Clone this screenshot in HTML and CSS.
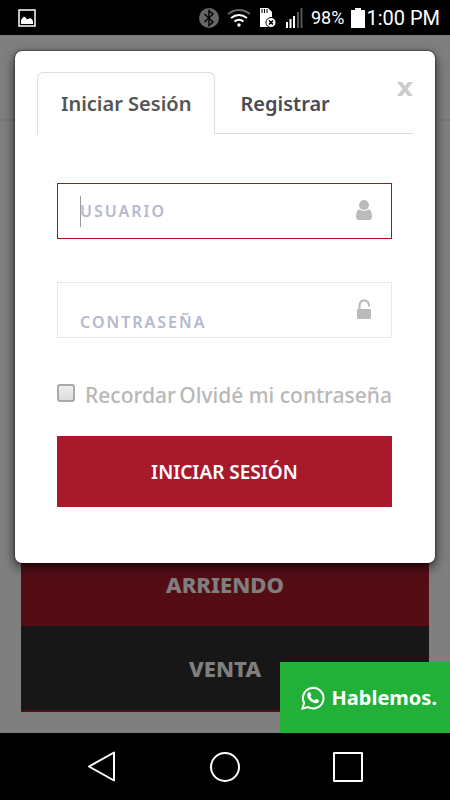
FILE: index.html
```html
<!DOCTYPE html>
<html lang="es">
  <head>
    <meta charset="utf-8">
    <meta name="viewport" content="width=device-width, initial-scale=1">
    <title>Iniciar Sesión</title>
    <link rel="stylesheet" href="styles.css">
  </head>
  <body>
    <div class="status-bar">
      <svg width="18" height="18" viewBox="0 0 18 18">
        <rect x="1" y="1" width="16" height="16" fill="none" stroke="#fff" stroke-width="1.5"/>
        <path d="M3 15v-4q1-2 3-3.500q2 1 3 3q1-1 2-.5q1-1.500 2-.5q2 1.500 2 3V15z" fill="#fff"/>
      </svg>
      <div class="status-icons">
        <svg width="20" height="20" viewBox="0 0 20 20">
          <circle cx="10" cy="10" r="10" fill="#666"/>
          <path d="M5.500 6l8.500 8l-4 3.500v-15L14 6l-8.500 8" fill="none" stroke="#000" stroke-width="1.400"/>
        </svg>
        <svg width="24" height="20" viewBox="0 0 24 20" fill="none" stroke-width="2">
          <path d="M1 6q11-8 22 0" stroke="#666"/>
          <path d="M4 10q8-6 16 0M7.500 13.500q4.500-3.500 9 0" stroke="#fff"/>
          <circle cx="12" cy="17" r="1.700" fill="#fff"/>
        </svg>
        <svg width="18" height="20" viewBox="0 0 18 20">
          <path d="M1 0h8l4 4v15H1z" fill="#fff"/>
          <path d="M3 1v4M5.500 1v4M8 1v4" stroke="#000"/>
          <circle cx="12" cy="14.500" r="5" fill="#fff" stroke="#000"/>
          <path d="M10 12.500l4 4m0-4l-4 4" stroke="#000" stroke-width="1.600"/>
        </svg>
        <svg width="18" height="20" viewBox="0 0 18 20">
          <path d="M1 14h2v6H1zM4.500 11h2v9h-2zM8 8h2v12H8z" fill="#fff"/>
          <path d="M12 4h2v16h-2zM15.500 0h2v20h-2z" fill="#555"/>
        </svg>
        <span class="battery-level">98%</span>
        <svg width="14" height="20" viewBox="0 0 14 20">
          <path d="M4 0h6v2h4v18H0V2h4z" fill="#fff"/>
        </svg>
        <span class="clock">1:00 PM</span>
      </div>
    </div>

    <main class="screen">
      <div class="page">
        <div class="navbar"></div>
        <nav class="page-links">
          <a href="#" class="page-link">ARRIENDO</a>
          <a href="#" class="page-link page-link-dark">VENTA</a>
        </nav>
      </div>

      <div class="backdrop">
        <div class="modal" role="dialog" aria-label="Iniciar Sesión">
          <button type="button" class="close-button" aria-label="Cerrar">
            <svg width="16" height="14" viewBox="0 0 16 14">
              <path d="M0 0h5l3 4l3-4h5l-5.500 7l5.500 7h-5l-3-4l-3 4H0l5.500-7z" fill="#ccc"/>
            </svg>
          </button>
          <div class="tabs">
            <button type="button" class="tab tab-active">Iniciar Sesión</button>
            <button type="button" class="tab">Registrar</button>
          </div>

          <form class="login-form">
            <div class="field">
              <input type="text" class="field-input field-input-active" placeholder="USUARIO" aria-label="Usuario">
              <span class="caret"></span>
              <svg class="field-icon" width="16" height="20" viewBox="0 0 16 20" fill="#bbb">
                <circle cx="8" cy="5" r="5"/>
                <path d="M3.500 9.200q4.500 3.600 9 0Q16 10 16 16.500Q16 20 13 20H3Q0 20 0 16.500Q0 10 3.500 9.200z"/>
              </svg>
            </div>
            <div class="field">
              <input type="password" class="field-input field-input-low" placeholder="CONTRASEÑA" aria-label="Contraseña">
              <svg class="field-icon" width="16" height="20" viewBox="0 0 16 20">
                <path d="M3.500 11V6a4.700 4.700 0 0 1 9.400 0v.5" fill="none" stroke="#bbb" stroke-width="2.200" stroke-linecap="round"/>
                <rect x="1" y="10" width="14" height="10" rx="1" fill="#bbb"/>
              </svg>
            </div>
            <div class="options">
              <label class="remember"><input type="checkbox" class="checkbox">Recordar</label>
              <a href="#" class="forgot">Olvidé mi contraseña</a>
            </div>
            <button type="submit" class="submit-button">INICIAR SESIÓN</button>
          </form>
        </div>
      </div>

      <a href="#" class="chat-button">
        <svg width="24" height="24" viewBox="0 0 24 24">
          <path d="M1.500 22.500l1.600-5.600A10.300 10.300 0 1 1 7 21z" fill="none" stroke="#fff" stroke-width="2"/>
          <path d="M7.300 6.500q1-1 1.800-.3l1.200 2.800q0 .6-1 1.600q1.500 2.800 4.200 3.900l1.400-1.600q.5-.2 2.900 1.200q.5.500-.2 1.800q-1.500 1.900-4 1.200q-5.300-1.500-7.300-6.300q-.6-2.600 1-4.300z" fill="#fff"/>
        </svg>
        Hablemos.
      </a>
    </main>

    <div class="system-nav">
      <button type="button" class="system-button" aria-label="Atrás">
        <svg width="32" height="32" viewBox="0 0 32 32"><path d="M28 1.500v28L3 15.500z"/></svg>
      </button>
      <button type="button" class="system-button" aria-label="Inicio">
        <svg width="32" height="32" viewBox="0 0 32 32"><circle cx="16" cy="16" r="14"/></svg>
      </button>
      <button type="button" class="system-button" aria-label="Recientes">
        <svg width="32" height="32" viewBox="0 0 32 32"><rect x="2" y="2" width="28" height="28"/></svg>
      </button>
    </div>
  </body>
</html>
```

FILE: styles.css
```css
* {
  box-sizing: border-box;
}

body {
  margin: 0;
  min-height: 100vh;
  display: flex;
  flex-direction: column;
  background-color: white;
  font-family: "Noto Sans", sans-serif;
  font-weight: 600;
}

button {
  font-family: inherit;
  font-weight: inherit;
  cursor: pointer;
}

a {
  text-decoration: none;
}

/* phone status bar */
.status-bar {
  display: flex;
  align-items: center;
  justify-content: space-between;
  height: 35px;
  padding: 0 10px 0 18px;
  background-color: black;
  color: white;
  font-family: Roboto, sans-serif;
  font-weight: 400;
}

.status-icons {
  display: flex;
  align-items: center;
  gap: 8px;
}

.battery-level {
  font-size: 18px;
  margin-right: -1px;
}

.clock {
  font-size: 20px;
  margin-left: -7px;
}

/* page behind the modal */
.screen {
  position: relative;
  flex: 1;
  display: flex;
  flex-direction: column;
}

.page {
  flex: 1;
  display: flex;
  flex-direction: column;
  justify-content: space-between;
}

.navbar {
  height: 86px;
  border-bottom: 2px solid #eee;
}

.page-links {
  margin: 0 21px 21px;
  border-bottom: 2px solid #a81a2b;
}

.page-link {
  display: block;
  padding: 28px 0;
  background-color: #a81a2b;
  color: white;
  font-size: 22px;
  font-weight: 800;
  line-height: 28px;
  text-align: center;
}

.page-link-dark {
  background-color: #2e2e2e;
}

.backdrop {
  position: absolute;
  inset: 0;
  padding: 16px 15px;
  background-color: rgba(0, 0, 0, 0.5);
}

/* modal */
.modal {
  position: relative;
  padding: 21px 22px 56px;
  background-color: white;
  border-radius: 7px;
  box-shadow: 0 4px 12px rgba(0, 0, 0, 0.7), 0 0 2px black;
}

.close-button {
  position: absolute;
  top: 31px;
  right: 22px;
  display: flex;
  padding: 0;
  border: none;
  background-color: transparent;
}

.tabs {
  display: flex;
  gap: 2px;
  border-bottom: 1px solid #ddd;
}

.tab {
  height: 62px;
  margin-bottom: -1px;
  padding: 0 22px;
  border: 1px solid transparent;
  border-bottom: none;
  background-color: transparent;
  color: #4a4a52;
  font-size: 20px;
}

.tab-active {
  padding: 0 23px;
  border-color: #ddd;
  border-radius: 6px 6px 0 0;
  background-color: white;
  color: #555;
}

.login-form {
  display: flex;
  flex-direction: column;
  padding: 49px 21px 0 20px;
}

.field {
  position: relative;
  margin-bottom: 43px;
}

.field-input {
  display: block;
  width: 100%;
  height: 56px;
  padding: 0 50px 0 22px;
  border: 1px solid #e8e8e8;
  border-radius: 0;
  outline: none;
  background-color: white;
  font-family: inherit;
  font-size: 16px;
  font-weight: 600;
  letter-spacing: 2px;
}

.field-input::placeholder {
  color: #b5b8ce;
}

.field-input-active {
  border-color: #b10e19;
}

.field-input-low {
  padding-top: 24px;
}

.caret {
  position: absolute;
  top: 13px;
  left: 23px;
  width: 1px;
  height: 31px;
  background-color: #999;
}

.field-icon {
  position: absolute;
  top: 17px;
  right: 20px;
}

.options {
  display: flex;
  justify-content: space-between;
  align-items: center;
  color: #b8b8b8;
  font-size: 21px;
  font-weight: 500;
  line-height: 28px;
  white-space: nowrap;
}

.remember {
  display: flex;
  align-items: center;
}

.checkbox {
  appearance: none;
  width: 18px;
  height: 18px;
  margin: 0 10px 4px 0;
  border: 2px solid #aaa;
  border-radius: 3px;
  background-image: linear-gradient(#eee, #ddd);
}

.forgot {
  color: inherit;
}

.submit-button {
  margin-top: 27px;
  height: 71px;
  border: none;
  background-color: #a81a2b;
  color: white;
  font-size: 19px;
  font-weight: 600;
}

.chat-button {
  position: absolute;
  right: 0;
  bottom: 0;
  display: flex;
  align-items: center;
  gap: 7px;
  height: 71px;
  padding: 0 13px 0 21px;
  background-color: #22b038;
  color: white;
  font-size: 20px;
  font-weight: 700;
}

/* phone navigation buttons */
.system-nav {
  display: flex;
  justify-content: center;
  align-items: center;
  gap: 91px;
  height: 67px;
  background-color: black;
}

.system-button {
  display: flex;
  padding: 0;
  border: none;
  background-color: transparent;
}

.system-button svg {
  fill: none;
  stroke: white;
  stroke-width: 2;
  stroke-linejoin: round;
}
```
